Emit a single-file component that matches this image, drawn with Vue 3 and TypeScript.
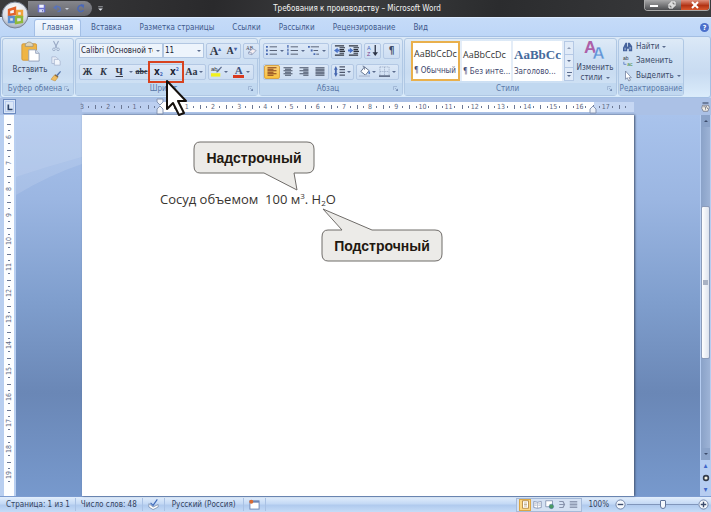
<script setup lang="ts">
import { ref } from 'vue'

const icons: Record<string, string> = {
  save: '<path d="M1 1h9l1 1v9H1z" fill="#6a6fd0"/><path d="M3 1h6v4H3z" fill="#f0f2ff"/><path d="M3 7h6v4H3z" fill="#d5daf8"/><path d="M7 8h1v2H7z" fill="#444a99"/>',
  undo: '<path d="M3 5c3-3 7-1 7 2 0 2-2 3-4 3" fill="none" stroke="#5a73b8" stroke-width="2"/><path d="M0 5l5-4v7z" fill="#5a73b8"/>',
  redo: '<path d="M9 3a4 4 0 1 0 1 5" fill="none" stroke="#4a68b8" stroke-width="2"/><path d="M6 0l5 1-1 5z" fill="#4a68b8"/>',
  more: '<path d="M2 3h8" stroke="#e4e8f0"/><path d="M2 6h8l-4 4z" fill="#e4e8f0"/>',
  cut: '<path d="M3 0l4 8M9 0L5 8" stroke="#98a8c4" stroke-width="1.3"/><circle cx="3.5" cy="10" r="1.6" fill="none" stroke="#98a8c4"/><circle cx="8.5" cy="10" r="1.6" fill="none" stroke="#98a8c4"/>',
  copy: '<path d="M1 1h5l2 2v6H1z" fill="#e8eef8" stroke="#a7b6d0"/><path d="M4 4h5l2 2v5H4z" fill="#f1f5fb" stroke="#a7b6d0"/>',
  brush: '<path d="M11 0l1 1-4 5-2-1z" fill="#5576ad"/><path d="M5 4l4 3-1 1-4-3z" fill="#7e5b33"/><path d="M4 5l4 3-3 4-5-2z" fill="#f0bd62" stroke="#b98834" stroke-width=".6"/>',
  paste: '<rect x="1" y="2" width="17" height="19" rx="1.5" fill="#efb545" stroke="#cf9436"/><path d="M5 3c0-2 2-1 3-3h3c1 2 3 1 3 3v2H5z" fill="#ddd5bd" stroke="#8f8a7a" stroke-width=".8"/><path d="M9 9h8l4 4v9H9z" fill="#fff" stroke="#8d9bb5"/><path d="M17 9v4h4" fill="#dbe5f4" stroke="#8d9bb5"/>',
  eraser: '<text x="0" y="6" font-size="6" font-family="Liberation Serif" fill="#445">AB</text><path d="M3 8l5-4 4 2-5 5-4-1z" fill="#f4eef2" stroke="#7e8fb0" stroke-width=".8"/><path d="M3 8l4 1v2" fill="none" stroke="#7e8fb0" stroke-width=".8"/>',
  bullets: '<path d="M0 1h2v2H0zM0 5h2v2H0zM0 9h2v2H0z" fill="#4768b0"/><path d="M4 2h8M4 6h8M4 10h8" stroke="#4d566b"/>',
  numbers: '<path d="M1 0v3M1 4v3M1 8v3" stroke="#4768b0" stroke-width="1.4"/><path d="M4 2h8M4 6h8M4 10h8" stroke="#4d566b"/>',
  levels: '<path d="M0 1h2v2H0zM3 5h2v2H3zM6 9h2v2H6z" fill="#4768b0"/><path d="M3 2h9M6 6h5M9 10h3" stroke="#4d566b"/>',
  outdent: '<path d="M1 1h10M6 3h6M6 5h5M6 7h6M6 9h5M1 11h10" stroke="#2f3440" stroke-width="1.3"/><path d="M0 6l4-3v2h2v2H4v2z" fill="#4a72c8"/>',
  indent: '<path d="M1 1h10M6 3h6M6 5h5M6 7h6M6 9h5M1 11h10" stroke="#2f3440" stroke-width="1.3"/><path d="M6 6L2 3v2H0v2h2v2z" fill="#4a72c8"/>',
  sort: '<text x="0" y="5" font-size="6" font-family="Liberation Sans" fill="#3f62b5">A</text><text x="0" y="12" font-size="6" font-family="Liberation Sans" fill="#7b3f8c">Z</text><path d="M9 0v9" stroke="#2c3446" stroke-width="1.4"/><path d="M6 8h6l-3 4z" fill="#2c3446"/>',
  left: '<path d="M0 1h12M0 5h12M0 9h12" stroke="#86401c" stroke-width="1.6"/><path d="M0 3h8M0 7h8M0 11h8" stroke="#86401c" stroke-width="1.6"/>',
  center: '<path d="M0 1h12M0 5h12M0 9h12M2 3h8M2 7h8M2 11h8" stroke="#4a5468" stroke-width="1.5"/>',
  right: '<path d="M0 1h12M0 5h12M0 9h12M5 3h7M5 7h7M5 11h7" stroke="#4a5468" stroke-width="1.5"/>',
  justify: '<path d="M0 1h12M0 3h12M0 5h12M0 7h12M0 9h12M0 11h12" stroke="#4a5468" stroke-width="1.5"/>',
  spacing: '<path d="M0 4l2-4 2 4zM0 8l2 4 2-4zM1 4h2v4H1z" fill="#4768b0"/><path d="M6 1h6M6 4h6M6 7h6M6 10h6" stroke="#4d566b" stroke-width="1.2"/>',
  fill: '<path d="M2 6l4-5 5 4-4 5z" fill="#fff" stroke="#5b6b88"/><path d="M4 0c2 0 2 2 2 4" fill="none" stroke="#5b6b88"/><path d="M11 5c2 3 1 4 0 4s-1-2 0-4" fill="#4d79c9"/><path d="M0 11h12" stroke="#b9c6dc" stroke-width="2"/>',
  border: '<path d="M1 1h10v10M1 1v10M6 1v10M1 6h10" fill="none" stroke="#93a3c0" stroke-dasharray="1 1"/><path d="M0 11h12" stroke="#3d4a66" stroke-width="1.4"/>',
  marker: '<text x="0" y="6" font-size="7" font-family="Liberation Sans" fill="#333">ab</text><path d="M12 0l1 1-5 6H6l1-2z" fill="#5e6f90"/><path d="M0 8h11v4H0z" fill="#f0f020"/>',
  find: '<path d="M1 5l2-4h2v4l1 1V1h2l3 4v6H7V8H5v3H0V7z" fill="#44629c"/><path d="M2 7h1v3H2zM8 6h1v3H8z" fill="#b9cceb"/>',
  replace: '<text x="0" y="5" font-size="6" font-family="Liberation Sans" fill="#333">ab</text><text x="5" y="12" font-size="6" font-family="Liberation Sans" fill="#3d8a3d">ac</text><path d="M1 7v3h3" fill="none" stroke="#5a7ac0"/>',
  select: '<path d="M3 0v10l2-2 2 4 2-1-2-3h3z" fill="#fff" stroke="#6d7c9a" stroke-width=".9"/>',
  styles: '<text x="-1" y="15" font-size="19" font-weight="bold" font-family="Liberation Sans" fill="#ad5fa8">A</text><text x="8" y="21" font-size="19" font-weight="bold" font-family="Liberation Sans" fill="#5f93d6" stroke="#dfeafa" stroke-width=".4">A</text>',
  launch: '<path d="M1 8V1h7" fill="none" stroke="#8298bd"/><path d="M10 10V5L5 10z" fill="#7188b0"/><path d="M4 4l4 4" stroke="#7188b0"/>',
  spell: '<path d="M1 5l5 4 6-3v3l-6 3-5-3z" fill="#fff" stroke="#6c7f9f" stroke-width=".8"/><path d="M3 4l3 3 5-7" fill="none" stroke="#3f69b8" stroke-width="1.4"/>',
  macro: '<rect x="1" y="2" width="10" height="9" fill="#fff" stroke="#6d86b4"/><path d="M1 3h10" stroke="#6d86b4" stroke-width="2"/><circle cx="2.5" cy="3" r="2.2" fill="#d96b32"/>',
  print: '<path d="M2 1h8v10H2z" fill="#fff" stroke="#a5762e"/><path d="M4 4h4M4 6h4M4 8h4" stroke="#b4a27c"/>',
  read: '<path d="M1 2l5 1 5-1v8l-5 1-5-1z" fill="#fff" stroke="#7586a8"/><path d="M6 3v8M2 5h3M7 5h3M2 7h3M7 7h3" stroke="#8d9ab5" stroke-width=".8"/>',
  web: '<path d="M1 1h9v8H1z" fill="#fff" stroke="#7586a8"/><circle cx="8.5" cy="8.5" r="3" fill="#4b9a62" stroke="#3a6c9c" stroke-width=".6"/>',
  outline: '<path d="M3 2h5l2 4-2 4H3M3 6h6" fill="none" stroke="#8793ac" stroke-width="1.6"/>',
  draft: '<path d="M1 2h10M1 4h10M1 6h10M1 8h10M1 10h10" stroke="#8793ac" stroke-width="1.2"/>',
  target: '<path d="M2 3h8l1 3-2 5H3L1 7z" fill="#f3efe8" stroke="#6b6f7c"/><path d="M3 5h3v4M7 4l2 4" fill="none" stroke="#6b6f7c"/><path d="M2 0h8" stroke="#3b4a68" stroke-width="1.5"/>'
}

const tabs = ['Вставка', 'Разметка страницы', 'Ссылки', 'Рассылки', 'Рецензирование', 'Вид']
const fontName = ref('Calibri (Основной текст)')
const fontSize = ref('11')
const zoom = ref(50)

interface StyleCard { sample: string; label: string; kind: string }
const cards: StyleCard[] = [
  { sample: 'AaBbCcDc', label: '¶ Обычный', kind: 'active' },
  { sample: 'AaBbCcDc', label: '¶ Без инте...', kind: '' },
  { sample: 'AaBbCc', label: 'Заголово...', kind: 'heading' }
]
const editing = [
  { icon: 'find', label: 'Найти', menu: true },
  { icon: 'replace', label: 'Заменить', menu: false },
  { icon: 'select', label: 'Выделить', menu: true }
]
const views = [
  { icon: 'print', label: 'Разметка страницы' },
  { icon: 'read', label: 'Режим чтения' },
  { icon: 'web', label: 'Веб-документ' },
  { icon: 'outline', label: 'Структура' },
  { icon: 'draft', label: 'Черновик' }
]
const horizontal: string[] = Array.from({ length: 22 }, (_, i) => {
  const n = i - 3
  return n === 0 || n > 17 ? '' : String(Math.abs(n))
})
const vertical: string[] = Array.from({ length: 14 }, (_, i) => String(i + 6))
</script>

<template>
  <div class="app">
    <header class="titlebar">
      <button class="office" aria-label="Кнопка Office">
        <svg viewBox="0 0 28 28">
          <defs>
            <radialGradient id="orb" cx=".5" cy=".3" r=".75">
              <stop offset="0" stop-color="#ffffff" />
              <stop offset=".65" stop-color="#d9dde6" />
              <stop offset="1" stop-color="#8e98ac" />
            </radialGradient>
          </defs>
          <circle cx="14" cy="14" r="13" fill="url(#orb)" stroke="#7b8496" />
          <g fill="none" stroke-width="2.4">
            <path d="M8 9l6-2v6l-6 1z" stroke="#e2622b" />
            <path d="M16 10h5v5h-5z" stroke="#f0a23a" />
            <path d="M8 16h5v5H8z" stroke="#5c8fd0" />
            <path d="M15 16h6v5l-6 1z" stroke="#8fb93b" />
          </g>
        </svg>
      </button>
      <div class="quick">
        <button aria-label="Сохранить"><svg class="ic" viewBox="0 0 12 12" v-html="icons.save" /></button>
        <button class="undo" aria-label="Отменить"><svg class="ic" viewBox="0 0 12 12" v-html="icons.undo" /><i class="caret pale" /></button>
        <button aria-label="Повторить"><svg class="ic" viewBox="0 0 12 12" v-html="icons.redo" /></button>
      </div>
      <button class="more" aria-label="Настройка панели"><svg viewBox="0 0 12 12" v-html="icons.more" /></button>
      <h1>Требования к производству – Microsoft Word</h1>
      <div class="window">
        <button aria-label="Свернуть"><svg viewBox="0 0 12 8"><path d="M2 4h8v2H2z" fill="#fff" /></svg></button>
        <button aria-label="Восстановить"><svg viewBox="0 0 12 8"><path d="M5 1h4v4H5zM3 3h4v4H3z" fill="#777" stroke="#fff" /></svg></button>
        <button class="close" aria-label="Закрыть"><svg viewBox="0 0 12 8"><path d="M3 1l6 6M9 1L3 7" stroke="#fff" stroke-width="2" /></svg></button>
      </div>
    </header>

    <nav class="tabs">
      <a href="#" class="tab current">Главная</a>
      <a v-for="t in tabs" :key="t" href="#" class="tab">{{ t }}</a>
      <button class="help" aria-label="Справка">?</button>
    </nav>

    <section class="ribbon">
      <div class="group clipboard">
        <div class="body">
          <button class="paste">
            <svg viewBox="0 0 22 23" v-html="icons.paste" />
            <span>Вставить</span>
            <i class="caret" />
          </button>
          <div class="stack">
            <button aria-label="Вырезать"><svg class="ic" viewBox="0 0 12 12" v-html="icons.cut" /></button>
            <button aria-label="Копировать"><svg class="ic" viewBox="0 0 12 12" v-html="icons.copy" /></button>
            <button aria-label="Формат по образцу"><svg class="ic" viewBox="0 0 12 12" v-html="icons.brush" /></button>
          </div>
        </div>
        <footer><span>Буфер обмена</span><button aria-label="Параметры буфера"><svg viewBox="0 0 12 12" v-html="icons.launch" /></button></footer>
      </div>

      <div class="group font">
        <div class="body rows">
          <div class="row">
            <div class="combos">
              <div class="combo name"><select v-model="fontName" aria-label="Шрифт"><option>Calibri (Основной текст)</option></select><i class="caret" /></div>
              <div class="combo size"><select v-model="fontSize" aria-label="Размер"><option>11</option></select><i class="caret" /></div>
            </div>
            <div class="set">
              <button class="serif big" aria-label="Увеличить">A<sup>▴</sup></button>
              <button class="serif small" aria-label="Уменьшить">A<sup>▾</sup></button>
            </div>
            <div class="set"><button aria-label="Очистить формат"><svg class="ic" viewBox="0 0 13 12" v-html="icons.eraser" /></button></div>
          </div>
          <div class="row">
            <div class="set wide">
              <button class="serif letter">Ж</button>
              <button class="serif letter italic">К</button>
              <button class="serif letter under">Ч</button>
              <i class="caret" />
              <button class="serif strike">abc</button>
              <span class="marked">
                <button class="cross">x<sub>2</sub></button>
                <button class="cross">x<sup>2</sup></button>
                <svg class="pointer" viewBox="0 0 22 38">
                  <path d="M2 2v28l6-6 6 12 5-2-6-12h8z" fill="#fff" stroke="#15100c" stroke-width="2" stroke-linejoin="round" />
                </svg>
              </span>
              <button class="serif">Aa<i class="caret" /></button>
            </div>
            <div class="set colors">
              <button aria-label="Цвет выделения"><svg class="ic" viewBox="0 0 13 12" v-html="icons.marker" /><i class="caret" /></button>
              <button class="ink" aria-label="Цвет текста"><b>A</b><i class="caret" /></button>
            </div>
          </div>
        </div>
        <footer><span>Шрифт</span><button aria-label="Параметры шрифта"><svg viewBox="0 0 12 12" v-html="icons.launch" /></button></footer>
      </div>

      <div class="group para">
        <div class="body rows">
          <div class="row">
            <div class="set lists">
              <button v-for="n in ['bullets', 'numbers', 'levels']" :key="n" :aria-label="n"><svg class="ic" viewBox="0 0 12 12" v-html="icons[n]" /><i class="caret" /></button>
            </div>
            <div class="set">
              <button v-for="n in ['outdent', 'indent']" :key="n" :aria-label="n"><svg class="ic" viewBox="0 0 12 12" v-html="icons[n]" /></button>
            </div>
            <div class="set"><button aria-label="Сортировка"><svg class="ic" viewBox="0 0 12 12" v-html="icons.sort" /></button></div>
            <div class="set"><button class="pilcrow">¶</button></div>
          </div>
          <div class="row">
            <div class="set aligns">
              <button v-for="n in ['left', 'center', 'right', 'justify']" :key="n" :class="{ on: n === 'left' }" :aria-label="n"><svg class="ic slim" viewBox="0 0 12 12" v-html="icons[n]" /></button>
            </div>
            <div class="set"><button aria-label="Интервал"><svg class="ic" viewBox="0 0 12 12" v-html="icons.spacing" /><i class="caret" /></button></div>
            <div class="set fills">
              <button v-for="n in ['fill', 'border']" :key="n" :aria-label="n"><svg class="ic" viewBox="0 0 12 12" v-html="icons[n]" /><i class="caret" /></button>
            </div>
          </div>
        </div>
        <footer><span>Абзац</span><button aria-label="Параметры абзаца"><svg viewBox="0 0 12 12" v-html="icons.launch" /></button></footer>
      </div>

      <div class="group styles">
        <div class="body">
          <div class="gallery">
            <button v-for="c in cards" :key="c.label" class="card" :class="c.kind">
              <span class="sample">{{ c.sample }}</span>
              <span class="label">{{ c.label }}</span>
            </button>
            <div class="scroller">
              <button aria-label="Вверх"><i class="caret up" /></button>
              <button aria-label="Вниз"><i class="caret" /></button>
              <button class="last" aria-label="Ещё"><i class="caret" /></button>
            </div>
          </div>
          <button class="change">
            <svg viewBox="0 0 22 22" v-html="icons.styles" />
            <span>Изменить</span>
            <span>стили <i class="caret" /></span>
          </button>
        </div>
        <footer><span>Стили</span><button aria-label="Параметры стилей"><svg viewBox="0 0 12 12" v-html="icons.launch" /></button></footer>
      </div>

      <div class="group editing">
        <div class="body stack">
          <button v-for="e in editing" :key="e.icon"><svg class="ic" viewBox="0 0 12 12" v-html="icons[e.icon]" /><span>{{ e.label }}</span><i v-if="e.menu" class="caret" /></button>
        </div>
        <footer><span>Редактирование</span></footer>
      </div>
    </section>

    <div class="ruler">
      <button class="corner" aria-label="Табуляция"><svg viewBox="0 0 12 12"><path d="M4 3v6h5" fill="none" stroke="#2f4468" stroke-width="2" /></svg></button>
      <div class="track">
        <div class="strip">
          <div class="scale"><span v-for="(n, i) in horizontal" :key="i">{{ n }}</span></div>
          <svg class="stop first" viewBox="0 0 8 16"><path d="M1 0h6v3L4 6 1 3zM4 7l3 3v5H1v-5z" fill="#eef2f9" stroke="#8796b4" /></svg>
          <svg class="stop end" viewBox="0 0 8 16"><path d="M4 7l3 3v4H1v-4z" fill="#eef2f9" stroke="#8796b4" /></svg>
        </div>
      </div>
      <button class="view" aria-label="Линейка"><svg viewBox="0 0 12 12" v-html="icons.target" /></button>
    </div>

    <main class="workspace">
      <div class="side"><div class="vscale"><span v-for="n in vertical" :key="n">{{ n }}</span></div></div>
      <div class="canvas">
        <svg class="sheen" viewBox="0 0 68 80" preserveAspectRatio="none">
          <path d="M0 0h68v42Q34 51 0 62z" fill="#fff" opacity=".2" />
          <path d="M0 62Q34 51 68 42v7Q34 60 0 80z" fill="#fff" opacity=".12" />
        </svg>
        <article class="page">
          <p>Сосуд объемом &nbsp;100 м<sup>3</sup>. H<sub>2</sub>O</p>
          <div class="callout top">
            <svg viewBox="0 0 122 50"><path d="M7 1h107q7 0 7 7v17q0 7-7 7h-13l3 17-33-17H7q-6 0-6-7V8q0-7 6-7z" fill="#ecebe8" stroke="#6f6c69" /></svg>
            <span>Надстрочный</span>
          </div>
          <div class="callout bottom">
            <svg viewBox="0 0 122 54"><path d="M2 1l49 21h63q7 0 7 7v17q0 7-7 7H7q-6 0-6-7V29q0-7 6-7h14z" fill="#ecebe8" stroke="#6f6c69" /></svg>
            <span>Подстрочный</span>
          </div>
        </article>
      </div>
      <aside class="scroll">
        <button aria-label="Прокрутить вверх"><i class="caret up" /></button>
        <div class="rail"><div class="thumb"><i /></div></div>
        <button class="down" aria-label="Прокрутить вниз"><i class="caret" /></button>
        <div class="jump">
          <button aria-label="Предыдущая">▴</button>
          <button aria-label="Объект"><svg viewBox="0 0 8 8"><circle cx="4" cy="4" r="2.4" fill="#f4f1e2" stroke="#333b4a" stroke-width="1.6" /></svg></button>
          <button aria-label="Следующая">▾</button>
        </div>
      </aside>
    </main>

    <footer class="status">
      <span class="cell">Страница: 1 из 1</span>
      <span class="cell">Число слов: 48</span>
      <span class="cell"><svg class="ic" viewBox="0 0 13 12" v-html="icons.spell" /></span>
      <span class="cell lang">Русский (Россия)</span>
      <span class="cell"><svg class="ic" viewBox="0 0 12 12" v-html="icons.macro" /></span>
      <div class="views">
        <button v-for="(v, i) in views" :key="v.icon" :class="{ on: i === 0 }" :aria-label="v.label"><svg viewBox="0 0 12 12" v-html="icons[v.icon]" /></button>
      </div>
      <span class="percent">100%</span>
      <button class="round" aria-label="Уменьшить масштаб"><svg viewBox="0 0 12 12"><circle cx="6" cy="6" r="5" fill="#f4f8fd" stroke="#6c7fa3" /><path d="M3 6h6" stroke="#3c4c6c" stroke-width="1.5" /></svg></button>
      <input v-model="zoom" type="range" min="0" max="100" aria-label="Масштаб">
      <button class="round" aria-label="Увеличить масштаб"><svg viewBox="0 0 12 12"><circle cx="6" cy="6" r="5" fill="#f4f8fd" stroke="#6c7fa3" /><path d="M3 6h6M6 3v6" stroke="#3c4c6c" stroke-width="1.5" /></svg></button>
    </footer>
  </div>
</template>

<style>
body { margin: 0; }
</style>

<style scoped>
* { box-sizing: border-box; }
.app { display: flex; flex-direction: column; min-height: 100vh; font-family: "DejaVu Sans Condensed", "DejaVu Sans", sans-serif; font-size: 8px; line-height: 10px; color: #3b4a68; background: #bfd6f4; overflow: hidden; }
button { display: flex; align-items: center; justify-content: center; gap: 2px; margin: 0; padding: 0; border: 0; background: none; font: inherit; color: inherit; }
svg { display: block; overflow: visible; }
.ic { width: 11px; height: 11px; flex: none; }
.caret { display: block; flex: none; width: 0; height: 0; border: 2px solid transparent; border-top-color: #5b6c8e; border-bottom: 0; }
.caret.up { border-top: 0; border-bottom: 2px solid #8e9bb3; }
.caret.pale { border-top-color: #c8cdd8; }

.titlebar { position: relative; display: flex; align-items: flex-start; height: 17px; padding-left: 28px; background: linear-gradient(100deg, #3a3a3c, #2a2a2c 30%, #3d3e40 48%, #2b2c2e 70%, #3a3b3d); }
.office { position: absolute; left: 1px; top: 1px; width: 28px; height: 28px; z-index: 2; }
.office svg { width: 28px; height: 28px; }
.quick { display: flex; align-items: center; gap: 7px; width: 64px; height: 15px; margin-top: 1px; padding-left: 9px; border-radius: 0 8px 8px 0; background: linear-gradient(#85868c, #66676e); }
.quick .ic { width: 9px; height: 9px; }
.undo { gap: 3px; }
.more { width: 16px; height: 17px; }
.more svg { width: 7px; height: 7px; }
h1 { flex: 1; margin: 0; padding-right: 38px; font-size: 8px; line-height: 18px; font-weight: normal; text-align: center; color: #f4f4f4; }
.window { display: flex; height: 11px; margin-right: 1px; border: 1px solid #aaa; border-top: 0; border-radius: 0 0 4px 4px; overflow: hidden; }
.window button { width: 18px; background: linear-gradient(#a9a9aa, #4c4d50); }
.window .close { width: 28px; background: linear-gradient(#e0917e, #b23314 55%, #d9572d); }
.window svg { width: 12px; height: 8px; }

.tabs { display: flex; align-items: stretch; height: 19px; padding: 1px 2px 0 34px; background: linear-gradient(#c5dbf8, #bdd6f7); border-top: 1px solid #dcebff; }
.tab { display: flex; align-items: center; padding: 0 9px; color: #40598c; text-decoration: none; }
.tab.current { padding: 0 7px; margin-right: 1px; border: 1px solid #a3bfe6; border-bottom: 0; border-radius: 3px 3px 0 0; background: linear-gradient(#f2f8ff, #dfebf8); }
.help { width: 9px; height: 9px; margin: 4px 0 0 auto; border-radius: 50%; background: #4a6fcb; color: #fff; font-weight: bold; font-size: 7px; }

.ribbon { display: flex; gap: 1px; height: 62px; padding: 1px; border: 1px solid #a4bfe3; border-radius: 3px; background: linear-gradient(#dce9f7, #d0e1f4 30%, #c8dbf1 60%, #dbecfb); }
.group { display: flex; flex-direction: column; flex: none; border: 1px solid #b0c8e4; border-radius: 3px; background: linear-gradient(#deeaf7, #d1e2f4 25%, #c9dcf1 60%, #d4e5f7); }
.body { display: flex; flex: 1; min-height: 0; }
.group footer { display: flex; align-items: center; height: 12px; padding: 0 3px; background: #c1d8f0; color: #5a78a8; }
.group footer span { flex: 1; text-align: center; white-space: nowrap; }
.group footer svg { width: 6px; height: 6px; }
.clipboard { width: 72px; }
.font { width: 183px; }
.para { width: 144px; }
.styles { width: 213px; }
.editing { width: 66px; }
.editing footer { padding: 0; }

.paste { flex-direction: column; width: 48px; gap: 1px; padding-left: 6px; }
.paste svg { width: 19px; height: 20px; }
.paste span { margin: 2px 0; }
.stack { display: flex; flex-direction: column; justify-content: space-around; }
.stack .ic { width: 10px; height: 10px; }

.rows { flex-direction: column; justify-content: center; gap: 5px; padding: 0 3px; }
.row { display: flex; align-items: center; gap: 2px; }
.set { display: flex; align-items: center; justify-content: space-around; height: 16px; gap: 3px; padding: 0 2px; border: 1px solid #b3c8e4; border-radius: 2px; background: linear-gradient(#dce8f7, #ccddf2); }
.combos { display: flex; }
.combo { display: flex; align-items: center; gap: 3px; height: 15px; padding-right: 2px; border: 1px solid #b2c7e2; background: #edf4fc; }
.combo.name { width: 84px; }
.combo.size { width: 41px; }
select { flex: 1; min-width: 0; height: 13px; margin: 0; padding: 0 0 0 1px; border: 0; appearance: none; background: none; font: inherit; line-height: 12px; color: #1c2333; overflow: hidden; text-overflow: clip; }
.serif { font-family: "Liberation Serif", serif; font-weight: bold; font-size: 10px; color: #2f3646; }
.serif sup { font-size: 6px; line-height: 6px; align-self: flex-start; color: #4663a8; }
.big, .small { gap: 0; width: 13px; }
.big { font-size: 12px; }
.letter { width: 13px; }
.italic { font-style: italic; }
.under { text-decoration: underline; }
.strike { font-size: 8px; text-decoration: line-through; }
.wide { justify-content: space-between; width: 128px; gap: 1px; padding: 0 1px; }
.colors { width: 47px; }
.marked { position: relative; display: flex; align-items: center; justify-content: space-around; width: 32px; height: 18px; outline: 2px solid #d8431f; z-index: 3; }
.cross { gap: 0; font-weight: bold; font-size: 10px; color: #1c2333; }
.cross sub, .cross sup { font-size: 5px; line-height: 5px; color: #3f62b5; }
.cross sub { align-self: flex-end; }
.cross sup { align-self: flex-start; }
.pointer { position: absolute; left: 15px; top: 16px; width: 22px; height: 38px; }
.ink b { width: 11px; height: 12px; border-bottom: 3px solid #d93a20; font-family: "Liberation Serif", serif; font-size: 11px; line-height: 9px; color: #3f517a; }
.lists { width: 67px; }
.lists button { gap: 3px; }
.pilcrow { width: 11px; font-size: 10px; font-weight: bold; }
.aligns { width: 66px; gap: 0; padding: 0; }
.aligns button { width: 16px; height: 14px; border-radius: 2px; }
.aligns .on { background: linear-gradient(#fbd27b, #f9c23f); border: 1px solid #d9a547; }
.slim { width: 10px; height: 9px; }
.fills { width: 45px; }

.styles .body { align-items: center; padding: 0 2px 0 6px; gap: 2px; }
.gallery { display: flex; gap: 2px; height: 40px; background: #e4edf8; }
.card { flex-direction: column; gap: 6px; width: 49px; padding: 3px 0 0 1px; align-items: flex-start; background: #fff; overflow: hidden; white-space: nowrap; }
.card.active { border: 2px solid #e9b04c; padding: 1px 0 0 1px; }
.sample { font-family: "Open Sans", sans-serif; font-size: 9px; line-height: 12px; color: #333; }
.heading .sample { font-family: "Liberation Serif", serif; font-size: 13px; font-weight: bold; color: #456a9c; }
.label { line-height: 10px; color: #3e466c; }
.scroller { display: flex; flex-direction: column; width: 10px; border: 1px solid #b5c9e5; background: #e1ebf8; }
.scroller button { flex: 1; border-bottom: 1px solid #b5c9e5; }
.scroller .last { border: 0; flex-direction: column; }
.last::before { content: ""; width: 5px; height: 1px; background: #5b6c8e; }
.change { flex: 1; flex-direction: column; gap: 0; }
.change svg { width: 20px; height: 21px; margin-bottom: 3px; }
.change span { display: flex; align-items: center; gap: 3px; }
.editing .stack { padding: 1px 0 0 4px; }
.editing .stack button { justify-content: flex-start; gap: 3px; }

.ruler { display: flex; align-items: stretch; height: 17px; background: #abc1e6; }
.corner { width: 13px; height: 15px; margin: 1px 0 0 3px; border: 1px solid #6e8cc0; background: #dbe7f8; outline: 1px solid #b9cdf0; outline-offset: -3px; }
.corner svg { width: 10px; height: 10px; }
.track { flex: 1; display: flex; justify-content: center; align-items: center; }
.strip { position: relative; width: 552px; height: 10px; background: linear-gradient(90deg, #bccff0 78px, #fff 78px, #fff 512px, #c6d7f3 512px); }
.scale { display: grid; grid-template-columns: repeat(22, 1fr); width: 576px; margin-left: -13px; clip-path: inset(0 11px 0 10px); }
.scale span, .vscale span { color: #5c6884; font-size: 7px; line-height: 10px; text-align: center; }
.scale span { height: 10px; background: linear-gradient(#6c7894, #6c7894) 0 50% / 1px 4px no-repeat, linear-gradient(#6c7894, #6c7894) 25% 50% / 1px 2px no-repeat, linear-gradient(#6c7894, #6c7894) 75% 50% / 1px 2px no-repeat; }
.stop { position: absolute; width: 8px; height: 16px; top: -3px; }
.first { left: 74px; }
.end { left: 507px; }
.view { width: 10px; margin-right: 1px; padding-top: 2px; }
.view svg { width: 9px; height: 9px; }

.workspace { display: flex; flex: 1; }
.side { display: flex; width: 16px; padding: 0 2px 0 4px; background: #b9cff0; }
.vscale { display: grid; grid-auto-rows: 26px; align-content: start; padding-top: 9px; background: #fdfeff; }
.vscale span { width: 10px; writing-mode: vertical-rl; transform: rotate(180deg); background: linear-gradient(#6c7894, #6c7894) 50% 100% / 4px 1px no-repeat, linear-gradient(#6c7894, #6c7894) 50% 25% / 2px 1px no-repeat, linear-gradient(#6c7894, #6c7894) 50% 75% / 2px 1px no-repeat; }
.canvas { position: relative; flex: 1; display: flex; justify-content: center; background: linear-gradient(#a9c3ec, #9bb6e2 22%, #809fce 48%, #6a87b6 73%, #7799cd); }
.sheen { position: absolute; left: 0; top: 0; width: 66px; height: 80px; }
.page { position: relative; width: 552px; padding: 74px 78px; background: #fff; box-shadow: 1px 0 2px #43536f; }
p { margin: 0; font-family: "Open Sans", "Noto Sans", sans-serif; font-size: 13px; line-height: 20px; color: #38342f; white-space: nowrap; }
p sup, p sub { font-size: 8px; line-height: 0; }
p sup { vertical-align: 5px; }
p sub { vertical-align: -2px; }
.callout { position: absolute; width: 122px; font-family: "Liberation Sans", sans-serif; font-size: 14px; font-weight: bold; line-height: 34px; text-align: center; color: #1f1810; }
.callout svg { position: absolute; inset: 0; width: 122px; }
.callout span { position: relative; }
.top { left: 111px; top: 26px; }
.bottom { left: 239px; top: 93px; padding-top: 21px; }

.scroll { display: flex; flex-direction: column; width: 11px; padding: 0 1px; background: #b6cdf1; }
.scroll > button { height: 12px; background: #8ba3c9; }
.scroll .caret { border-top-color: #3c4c6c; }
.scroll .up { border-bottom-color: #3c4c6c; }
.rail { flex: 1; padding-top: 79px; background: linear-gradient(90deg, #8aa2c8, #9db3d6); }
.thumb { display: flex; align-items: center; justify-content: center; height: 153px; border: 1px solid #8b9bb9; border-radius: 2px; background: linear-gradient(90deg, #fff, #dde3ee); }
.thumb i { width: 5px; height: 5px; background: #a9b2c4; }
.jump { display: flex; flex-direction: column; justify-content: space-around; height: 36px; color: #3f66c8; }
.jump svg { width: 8px; height: 8px; }

.status { display: flex; align-items: center; height: 16px; padding: 0 2px 0 1px; border-top: 1px solid #7d9cd0; background: linear-gradient(#e2eefc, #c4d9f5 45%, #b0caee 55%, #c5dbf7); color: #33435f; }
.cell { display: flex; align-items: center; height: 13px; padding: 0 5px; border-right: 1px solid #a9c1e4; white-space: nowrap; }
.lang { padding: 0 7px; }
.views { display: flex; margin-left: auto; padding: 0 2px; border: 1px solid #a5bad9; background: #d4e1f3; }
.views button { width: 12px; height: 12px; }
.views .on { border: 1px solid #dba645; background: #fbd885; }
.views svg { width: 9px; height: 9px; }
.percent { padding: 0 6px; }
.round svg { width: 11px; height: 11px; }
input { width: 71px; height: 12px; margin: 0 0 0 1px; appearance: none; background: linear-gradient(#8096bb, #8096bb) center / 100% 1px no-repeat; }
input::-webkit-slider-thumb { appearance: none; width: 6px; height: 9px; border: 1px solid #60759c; border-radius: 1px 1px 3px 3px; background: #f4f8fd; }
</style>
